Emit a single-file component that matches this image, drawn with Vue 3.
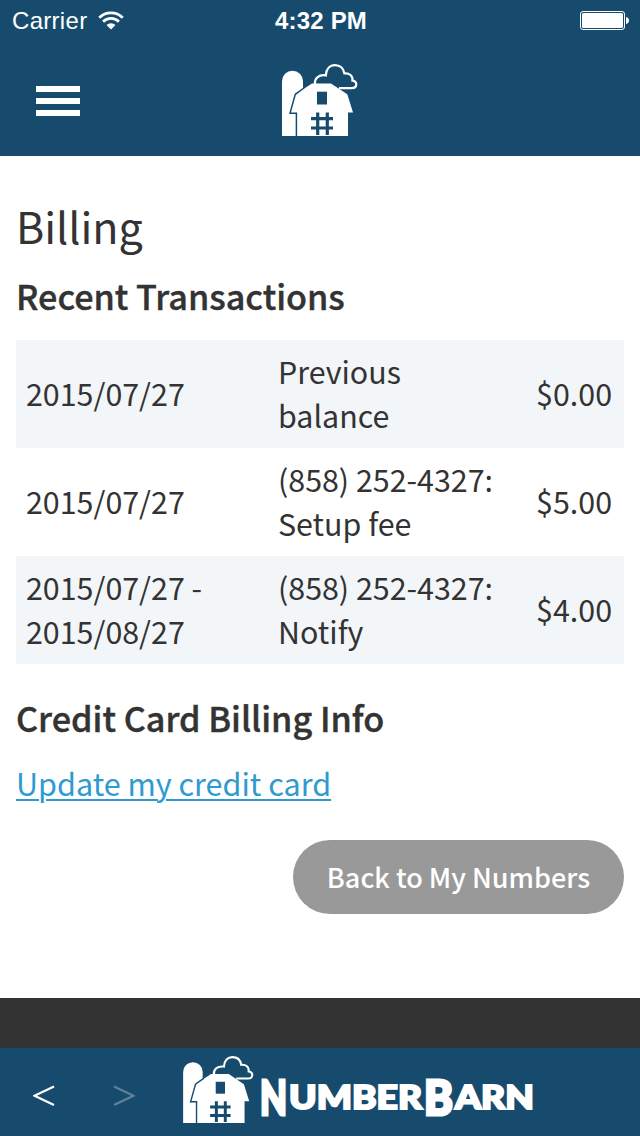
<script setup>
import { ref } from 'vue'

const transactions = ref([
  { date: ['2015/07/27'], details: ['Previous', 'balance'], amount: '$0.00' },
  { date: ['2015/07/27'], details: ['(858) 252-4327:', 'Setup fee'], amount: '$5.00' },
  {
    date: ['2015/07/27 -', '2015/08/27'],
    details: ['(858) 252-4327:', 'Notify'],
    amount: '$4.00',
  },
])
</script>

<template>
  <div class="app">
    <!-- Barn drawing, shared by header and footer -->
    <svg class="defs" aria-hidden="true">
      <symbol id="barn" viewBox="0 0 76 72">
        <path d="M0 72V17.2a10.5 10.5 0 0 1 21 0V72z" fill="#fff" />
        <path
          d="M33 20c-.6-5.500 4-9.800 10.800-8.600C44.200 4.800 48 1.200 53 1.200s8.600 3.200 9.400 8.200c5-.6 8.600 2.600 8 7.200 5.400.8 5.200 7.600-.8 7.600H57"
          fill="none"
          stroke="#fff"
          stroke-width="2.200"
        />
        <path
          d="M30 19.400L13.300 30.300 8.300 49H15v23h51V48.500h5L65.300 30.300 49 19.400z"
          fill="#fff"
        />
        <path
          d="M22 24L13.300 30.300 8 49.200h6.400V72"
          fill="none"
          stroke="#174b6e"
          stroke-width="1.500"
        />
        <path d="M35 27.700h10v12.800H35z" fill="#174b6e" />
        <path
          d="M35.700 48.500V71M45.300 48.500V71M29 54.700h22M29 64h22"
          stroke="#174b6e"
          stroke-width="3.200"
        />
      </symbol>
    </svg>

    <!-- Status bar -->
    <div class="status-bar">
      <div class="carrier">
        <span>Carrier</span>
        <svg class="wifi" viewBox="0 0 26 19">
          <path d="M1.300 6.700a16.500 16.500 0 0 1 23.400 0M5.100 10.700a11.200 11.200 0 0 1 15.800 0" />
          <path class="dot" d="M8.500 14a6.400 6.400 0 0 1 9 0L13 18.500z" />
        </svg>
      </div>
      <span class="time">4:32 PM</span>
      <svg class="battery" viewBox="0 0 50 20">
        <rect x="0.500" y="0.500" width="44" height="18" rx="2.500" fill="none" stroke="#fff" />
        <rect x="2" y="2" width="41" height="15" rx="1.500" fill="#fff" />
        <path d="M46 6c4 .6 4 6.400 0 7z" fill="#fff" />
      </svg>
    </div>

    <!-- Header -->
    <header class="header">
      <button class="menu" aria-label="Menu">
        <span></span>
        <span></span>
        <span></span>
      </button>
      <svg class="header-logo"><use href="#barn" /></svg>
    </header>

    <!-- Content -->
    <main class="content">
      <h1>Billing</h1>
      <h2>Recent Transactions</h2>
      <table>
        <tbody>
          <tr v-for="(item, index) in transactions" :key="index">
            <td class="date">
              <div v-for="line in item.date" :key="line">{{ line }}</div>
            </td>
            <td class="details">
              <div v-for="line in item.details" :key="line">{{ line }}</div>
            </td>
            <td class="amount">{{ item.amount }}</td>
          </tr>
        </tbody>
      </table>
      <h2 class="card-title">Credit Card Billing Info</h2>
      <a class="card-link" href="#">Update my credit card</a>
      <div class="actions">
        <button class="back">Back to My Numbers</button>
      </div>
    </main>

    <div class="strip"></div>

    <!-- Bottom navigation -->
    <footer class="footer">
      <svg class="arrow" viewBox="0 0 22 22"><path d="M21 1.500L1.500 10.700 21 20" /></svg>
      <svg class="arrow next" viewBox="0 0 22 22"><path d="M1 1.500L20.500 10.700 1 20" /></svg>
      <svg class="footer-logo"><use href="#barn" /></svg>
      <svg class="wordmark" viewBox="0 0 276 44">
        <text class="cap" x="0" y="39.500" textLength="27" lengthAdjust="spacingAndGlyphs">N</text>
        <text x="29" y="34" textLength="133" lengthAdjust="spacingAndGlyphs">UMBER</text>
        <text class="cap" x="164" y="39.500" textLength="29" lengthAdjust="spacingAndGlyphs">B</text>
        <text x="195" y="34" textLength="79" lengthAdjust="spacingAndGlyphs">ARN</text>
      </svg>
    </footer>
  </div>
</template>

<style>
body {
  margin: 0;
  background: #fff;
}
</style>

<style scoped>
.app {
  width: 640px;
  height: 1136px;
  display: flex;
  flex-direction: column;
  overflow: hidden;
  color: #333;
  font-family: 'Noto Sans CJK SC', 'Noto Sans', sans-serif;
}

.defs {
  position: absolute;
  width: 0;
  height: 0;
}

.status-bar {
  height: 40px;
  padding: 1px 10px 0 12px;
  display: grid;
  grid-template-columns: 1fr auto 1fr;
  align-items: center;
  background: #174b6e;
  color: #fff;
  font-family: 'Liberation Sans', Arial, sans-serif;
  font-size: 24px;
  box-sizing: border-box;
}

.carrier {
  display: flex;
  align-items: center;
  gap: 11px;
  letter-spacing: 0.3px;
}

.wifi {
  width: 26px;
  height: 19px;
  fill: none;
  stroke: #fff;
  stroke-width: 2.8;
}

.wifi .dot {
  fill: #fff;
  stroke: none;
}

.time {
  font-weight: 700;
  letter-spacing: 0.2px;
}

.battery {
  width: 50px;
  height: 20px;
  justify-self: end;
}

.header {
  height: 116px;
  padding: 0 36px;
  display: grid;
  grid-template-columns: 246px 76px;
  align-items: start;
  background: #174b6e;
  box-sizing: border-box;
}

.menu {
  width: 44px;
  margin-top: 46px;
  padding: 0;
  display: flex;
  flex-direction: column;
  gap: 6px;
  border: none;
  background: none;
}

.menu span {
  height: 6px;
  background: #fff;
}

.header-logo {
  width: 76px;
  height: 72px;
  margin-top: 24px;
}

.content {
  height: 842px;
  padding: 37px 16px 0;
  box-sizing: border-box;
}

h1 {
  margin: 0;
  font-size: 43px;
  font-weight: 400;
  line-height: 64px;
}

h2 {
  margin: 13px 0 20px;
  font-size: 34.200px;
  font-weight: 500;
  line-height: 50px;
  -webkit-text-stroke: 0.4px #333;
}

table {
  width: 100%;
  border-collapse: collapse;
  table-layout: fixed;
  font-size: 30.400px;
  line-height: 44px;
}

tr {
  height: 108px;
}

tr:nth-child(odd) {
  background: #f3f6f9;
}

td {
  padding: 9px 10px 11px;
  vertical-align: middle;
  white-space: nowrap;
  box-sizing: border-box;
}

.date {
  width: 252px;
}

.details {
  width: 236px;
}

.amount {
  text-align: right;
  padding-right: 12px;
}

.card-title {
  margin: 28px 0 19px;
}

.card-link {
  display: block;
  width: fit-content;
  color: #2f9ad0;
  font-size: 30.550px;
  line-height: 44px;
  text-decoration-thickness: 2px;
  text-underline-offset: 3px;
}

.actions {
  display: flex;
  justify-content: flex-end;
  margin-top: 35px;
}

.back {
  width: 331px;
  height: 74px;
  padding: 0 0 2px;
  border: none;
  border-radius: 37px;
  background: #999;
  color: #fff;
  font-family: inherit;
  font-size: 27px;
  font-weight: 500;
}

.strip {
  height: 50px;
  background: #333;
}

.footer {
  height: 88px;
  padding-left: 33px;
  display: flex;
  align-items: flex-start;
  background: #174b6e;
  box-sizing: border-box;
}

.arrow {
  width: 22px;
  height: 22px;
  margin-top: 37px;
  fill: none;
  stroke: #fff;
  stroke-width: 2.2;
}

.arrow.next {
  margin-left: 58px;
  opacity: 0.3;
}

.footer-logo {
  width: 71px;
  height: 67px;
  margin: 8px 0 0 48px;
}

.wordmark {
  width: 276px;
  height: 44px;
  margin: 27px 0 0 6px;
  overflow: visible;
  fill: #fff;
  stroke: #fff;
  stroke-width: 2;
  font-family: Lato, sans-serif;
  font-size: 32px;
  font-weight: 900;
}

.wordmark .cap {
  font-size: 47px;
  stroke-width: 3;
}
</style>
